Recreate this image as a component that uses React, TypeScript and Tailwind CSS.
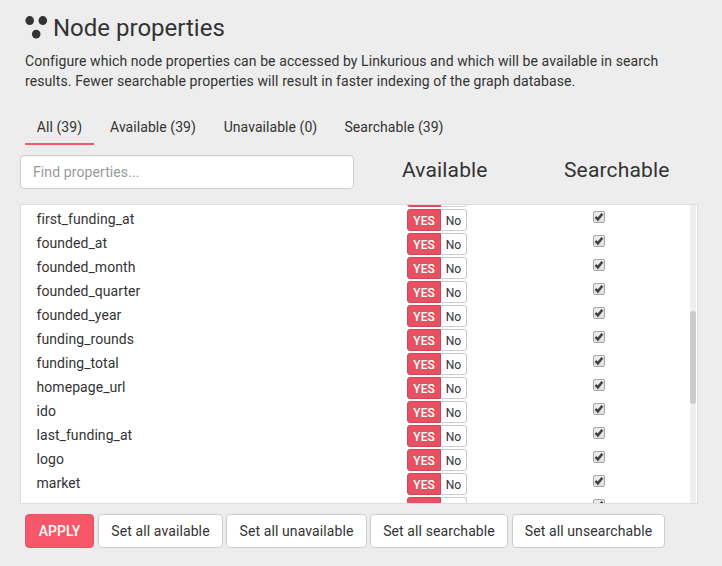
const properties: string[] = [
  'first_funding_at', 'founded_at', 'founded_month', 'founded_quarter',
  'founded_year', 'funding_rounds', 'funding_total', 'homepage_url', 'ido',
  'last_funding_at', 'logo', 'market',
];

const tabs = [
  { label: 'All (39)', width: 'w-[69px]' },
  { label: 'Available (39)', width: 'w-[112px]' },
  { label: 'Unavailable (0)', width: 'w-[117px]' },
  { label: 'Searchable (39)', width: 'w-[124px]' },
];

const actions = [
  { label: 'Set all available', width: 'w-[125px]' },
  { label: 'Set all unavailable', width: 'w-[141px]' },
  { label: 'Set all searchable', width: 'w-[138px]' },
  { label: 'Set all unsearchable', width: 'ml-px w-[153px]' },
];

function NodesIcon() {
  return (
    <svg className="mt-4 h-[23px] w-[23px] shrink-0" viewBox="0 0 23 23" fill="#333333">
      <ellipse cx="4.7" cy="4.6" rx="4.3" ry="4.5" />
      <ellipse cx="17.8" cy="4.6" rx="4.3" ry="4.5" />
      <ellipse cx="11.2" cy="18.1" rx="4.3" ry="4.4" />
    </svg>
  );
}

function Checkbox() {
  return (
    <span className="mt-[3px] flex h-3 w-3 shrink-0 items-center justify-center rounded-[2px] border border-[#a6a6a6] bg-linear-to-b from-[#eeeeee] to-[#dedede]">
      <svg className="h-2.5 w-2.5 shrink-0" viewBox="0 0 10 10" fill="none" stroke="#404040" strokeWidth="2.5">
        <path d="M1.5 5 L3.9 7.3 L8.4 1.8" />
      </svg>
    </span>
  );
}

function PropertyRow({ name }: { name?: string }) {
  return (
    <div className="flex h-6 shrink-0 items-start">
      <span className="w-[386px] pl-[15.5px] text-[14px] leading-[22px] tracking-[0.06px]">{name}</span>
      <div className="mt-px flex h-[22px] w-[186px] text-[12px] leading-[22px]">
        <span className="w-[34px] rounded-l-[3px] border border-[#d54458] bg-[#e75262] text-center font-medium text-white">{name && 'YES'}</span>
        <span className="w-[26px] rounded-r-[3px] border border-l-0 border-[#cccccc] bg-white text-center">{name && 'No'}</span>
      </div>
      <Checkbox />
    </div>
  );
}

export default function App() {
  return (
    <main className="flex h-[566px] w-[722px] flex-col overflow-hidden bg-[#ededed] font-[Roboto,sans-serif] text-[14px] text-[#333333]">
      <header className="pl-[25px]">
        <div className="flex h-[50px] items-start">
          <NodesIcon />
          <h1 className="ml-[5px] mt-[13px] text-[24px] leading-[31px]">Node properties</h1>
        </div>
        <p className="pt-px leading-5 tracking-[0.09px] whitespace-nowrap">
          Configure which node properties can be accessed by Linkurious and which will be available in search
          <br />
          results. Fewer searchable properties will result in faster indexing of the graph database.
        </p>
      </header>

      <nav className="mt-[18px] flex h-9 gap-[3px] pl-[25px]">
        {tabs.map((tab, i) => (
          <button
            key={tab.label}
            className={`${tab.width} h-9 whitespace-nowrap border-b-2 pt-0.5 text-center tracking-[0.06px] ${i === 0 ? 'border-[#f85769]' : 'border-transparent'}`}
          >
            {tab.label}
          </button>
        ))}
      </nav>

      <div className="mt-[10px] flex h-[34px] pl-5">
        <input
          className="h-[34px] w-[334px] rounded border border-[#cccccc] bg-white px-3 tracking-[0.1px] shadow-[inset_0_1px_1px_rgba(0,0,0,0.05)] placeholder:text-[#999999]"
          placeholder="Find properties..."
        />
        <h2 className="ml-12 w-[162px] text-[21px] leading-[30px] tracking-[0.15px]">Available</h2>
        <h2 className="text-[21px] leading-[30px] tracking-[0.15px]">Searchable</h2>
      </div>

      <section className="ml-5 mt-[15px] flex h-[300px] w-[678px] overflow-hidden border border-[#dddddd] bg-white">
        <div className="flex h-[298px] w-[669px] flex-col overflow-hidden">
          <div className="-mt-[21px] flex flex-col">
            <PropertyRow />
            {properties.map((name) => (
              <PropertyRow key={name} name={name} />
            ))}
            <PropertyRow />
          </div>
        </div>
        <div className="h-full w-1.5 bg-[#eeeeee] pt-[106px]">
          <div className="h-[93px] rounded-[3px] bg-[#cccccc]" />
        </div>
      </section>

      <footer className="mt-[10px] flex h-[34px] pl-[25px]">
        <button className="mr-1 w-[69px] rounded border border-[#e75262] bg-[#f85769] font-medium text-white">APPLY</button>
        <div className="flex gap-[3px]">
          {actions.map((action) => (
            <button key={action.label} className={`${action.width} whitespace-nowrap rounded border border-[#cccccc] bg-white tracking-[0.1px]`}>
              {action.label}
            </button>
          ))}
        </div>
      </footer>
    </main>
  );
}
